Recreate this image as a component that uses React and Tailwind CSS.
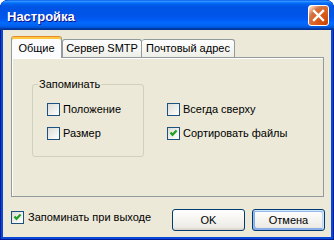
import React from "react";

const Box = ({ checked }) => (
  <span className="w-[13px] h-[13px] shrink-0 border border-[#1C5180] bg-[linear-gradient(135deg,#DCDCD7,#FFFFFF)] flex items-center justify-center">
    {checked && (
      <svg width="11" height="11" viewBox="0 0 11 11">
        <path d="M2.5 4.5 L4.5 6.8 L8.6 2.6" fill="none" stroke="#21A121" strokeWidth="2.2" />
      </svg>
    )}
  </span>
);

const Row = ({ checked, label }) => (
  <div className="flex items-center gap-[3px] h-[13px] leading-[13px] whitespace-nowrap">
    <Box checked={checked} />
    <span>{label}</span>
  </div>
);

export default function App() {
  return (
    <div className="w-[334px] h-[240px] flex flex-col rounded-t-[8px] overflow-hidden bg-[#0848D6] shadow-[inset_0_0_0_1px_#001A95] font-['Liberation_Sans',Arial,sans-serif] text-[11px] text-black">
      <div className="h-[30px] shrink-0 flex items-center pl-[7px] pr-[5px] rounded-t-[8px] bg-[linear-gradient(180deg,#0058EE_0%,#3593FF_4%,#288EFF_6%,#127DFF_8%,#036FFC_10%,#0262EE_14%,#0057E5_20%,#0054E3_24%,#0055EB_56%,#005BF5_66%,#026AFE_76%,#0062EF_86%,#0052D6_92%,#0040AB_94%,#003092_100%)]">
        <span className="text-white font-bold text-[13px] leading-[15px] pt-[2px] [text-shadow:1px_1px_#0F1089]">
          Настройка
        </span>
        <div className="ml-auto mt-[1px] w-[21px] h-[21px] rounded-[3px] border border-white bg-[radial-gradient(circle_at_90%_90%,#CC4600_0%,#DC6527_55%,#CD7546_70%,#FFCCB2_90%,#FFFFFF_100%)] flex items-center justify-center">
          <svg width="19" height="19" viewBox="0 0 19 19">
            <path d="M5 5 L14 14 M14 5 L5 14" stroke="#FFFFFF" strokeWidth="2.4" strokeLinecap="square" />
          </svg>
        </div>
      </div>

      <div className="flex-1 mx-[3px] mb-[3px] bg-[#ECE9D8] flex flex-col">
        <div className="flex items-end ml-[8px] mt-[6px] h-[21px]">
          <div className="relative z-10 w-[51px] h-[22px] -mb-[1px] rounded-t-[3px] border border-b-0 border-[#919B9C] border-t-[#E68B2C] bg-[#FCFCFE] shadow-[inset_0_2px_#FFC73C] flex items-center justify-center pt-[1px]">
            Общие
          </div>
          <div className="w-[80px] h-[18px] rounded-t-[3px] border border-b-0 border-[#919B9C] bg-[linear-gradient(180deg,#FFFFFF,#FAFAF9_26%,#F0F0EA_95%,#ECEBE5)] flex items-center justify-center">
            Сервер SMTP
          </div>
          <div className="w-[93px] h-[18px] rounded-t-[3px] border border-b-0 border-l-0 border-[#919B9C] bg-[linear-gradient(180deg,#FFFFFF,#FAFAF9_26%,#F0F0EA_95%,#ECEBE5)] flex items-center justify-center">
            Почтовый адрес
          </div>
        </div>

        <div className="ml-[8px] w-[313px] h-[140px] shrink-0 border border-[#919B9C] bg-[#ECE9D8] shadow-[inset_1px_1px_#FFFFFF] flex items-start">
          <div className="relative ml-[20px] mt-[26px] w-[112px] h-[73px] rounded-[3px] border border-[#D0D0BF] pl-[14px] pt-[18px] flex flex-col gap-[11px]">
            <span className="absolute -top-[7px] left-[5px] px-[1px] bg-[#ECE9D8] leading-[13px]">
              Запоминать
            </span>
            <Row label="Положение" />
            <Row label="Размер" />
          </div>
          <div className="ml-[23px] mt-[45px] flex flex-col gap-[11px]">
            <Row label="Всегда сверху" />
            <Row checked label="Сортировать файлы" />
          </div>
        </div>

        <div className="flex items-start ml-[8px] mr-[6px] mt-[12px]">
          <div className="mt-[2px] flex items-center gap-[4px] h-[13px] whitespace-nowrap">
            <Box checked />
            <span>Запоминать при выходе</span>
          </div>
          <div className="ml-auto flex gap-[7px]">
            <div className="w-[73px] h-[22px] rounded-[3px] border border-[#003C74] bg-[linear-gradient(180deg,#FFFFFF,#ECEBE5_86%,#D8D0C4)] flex items-center justify-center">
              OK
            </div>
            <div className="w-[73px] h-[22px] rounded-[3px] border border-[#003C74] bg-[linear-gradient(180deg,#FFFFFF,#ECEBE5_86%,#D8D0C4)] shadow-[inset_-1px_1px_#CEE7FF,inset_1px_2px_#98B8EA,inset_-2px_2px_#BCD4F6,inset_1px_-1px_#89ADE4,inset_2px_-2px_#89ADE4] flex items-center justify-center">
              Отмена
            </div>
          </div>
        </div>
      </div>
    </div>
  );
}
